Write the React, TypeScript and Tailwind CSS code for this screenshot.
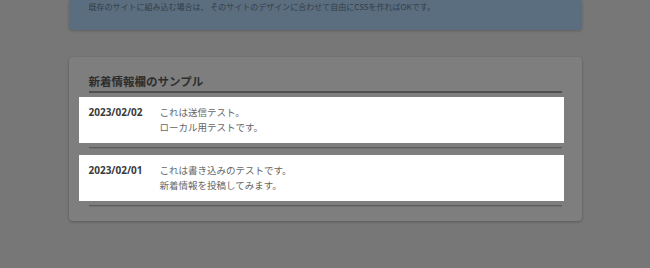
const news = [
  { date: "2023/02/02", lines: ["これは送信テスト。", "ローカル用テストです。"] },
  { date: "2023/02/01", lines: ["これは書き込みのテストです。", "新着情報を投稿してみます。"] },
];

const jp = "font-['Noto_Sans_CJK_JP','Noto_Sans',sans-serif]";

const App = () => {
  return (
    <div className={`min-h-[268px] w-full bg-[#777777] ${jp}`}>
      <div className="mx-auto w-[513px]">
        {/* info box, scrolled partly out of view */}
        <div className="rounded-b-[4px] bg-[#5a6e80] px-[20px] pb-[17px] pt-[1px] shadow-[0_1px_3px_rgba(0,0,0,0.2)]">
          <p className="text-[8px] leading-[12px] text-[#333d47]">
            既存のサイトに組み込む場合は、 そのサイトのデザインに合わせて自由にCSSを作ればOKです。
          </p>
        </div>

        {/* news card */}
        <div className="mt-[27px] rounded-[4px] bg-[#7e7e7e] px-[20px] pb-[14px] pt-[15px] shadow-[0_1px_3px_rgba(0,0,0,0.25)]">
          <h2 className="border-b-2 border-[#505050] pb-[1px] text-[11.5px] font-bold leading-[18px] text-[#2e2e2e]">
            新着情報欄のサンプル
          </h2>

          <ul className="mt-[4px]">
            {news.map(({ date, lines }, i) => (
              <li key={date} className={i < news.length - 1 ? "mb-[6px]" : ""}>
                <div className="-ml-[10px] -mr-[2px] flex bg-white pb-[8px] pl-[10px] pt-[8px]">
                  <span className="w-[71px] shrink-0 font-['Open_Sans',sans-serif] text-[10px] font-bold leading-[15px] text-[#3a3a3a]">
                    {date}
                  </span>
                  <div className="text-[9.5px] leading-[15px] text-[#666666]">
                    {lines.map((l) => (
                      <p key={l}>{l}</p>
                    ))}
                  </div>
                </div>
                <div className="mt-[4px] border-b border-t border-b-[#727272] border-t-[#5c5c5c]" />
              </li>
            ))}
          </ul>
        </div>
      </div>
    </div>
  );
};

export default App;
